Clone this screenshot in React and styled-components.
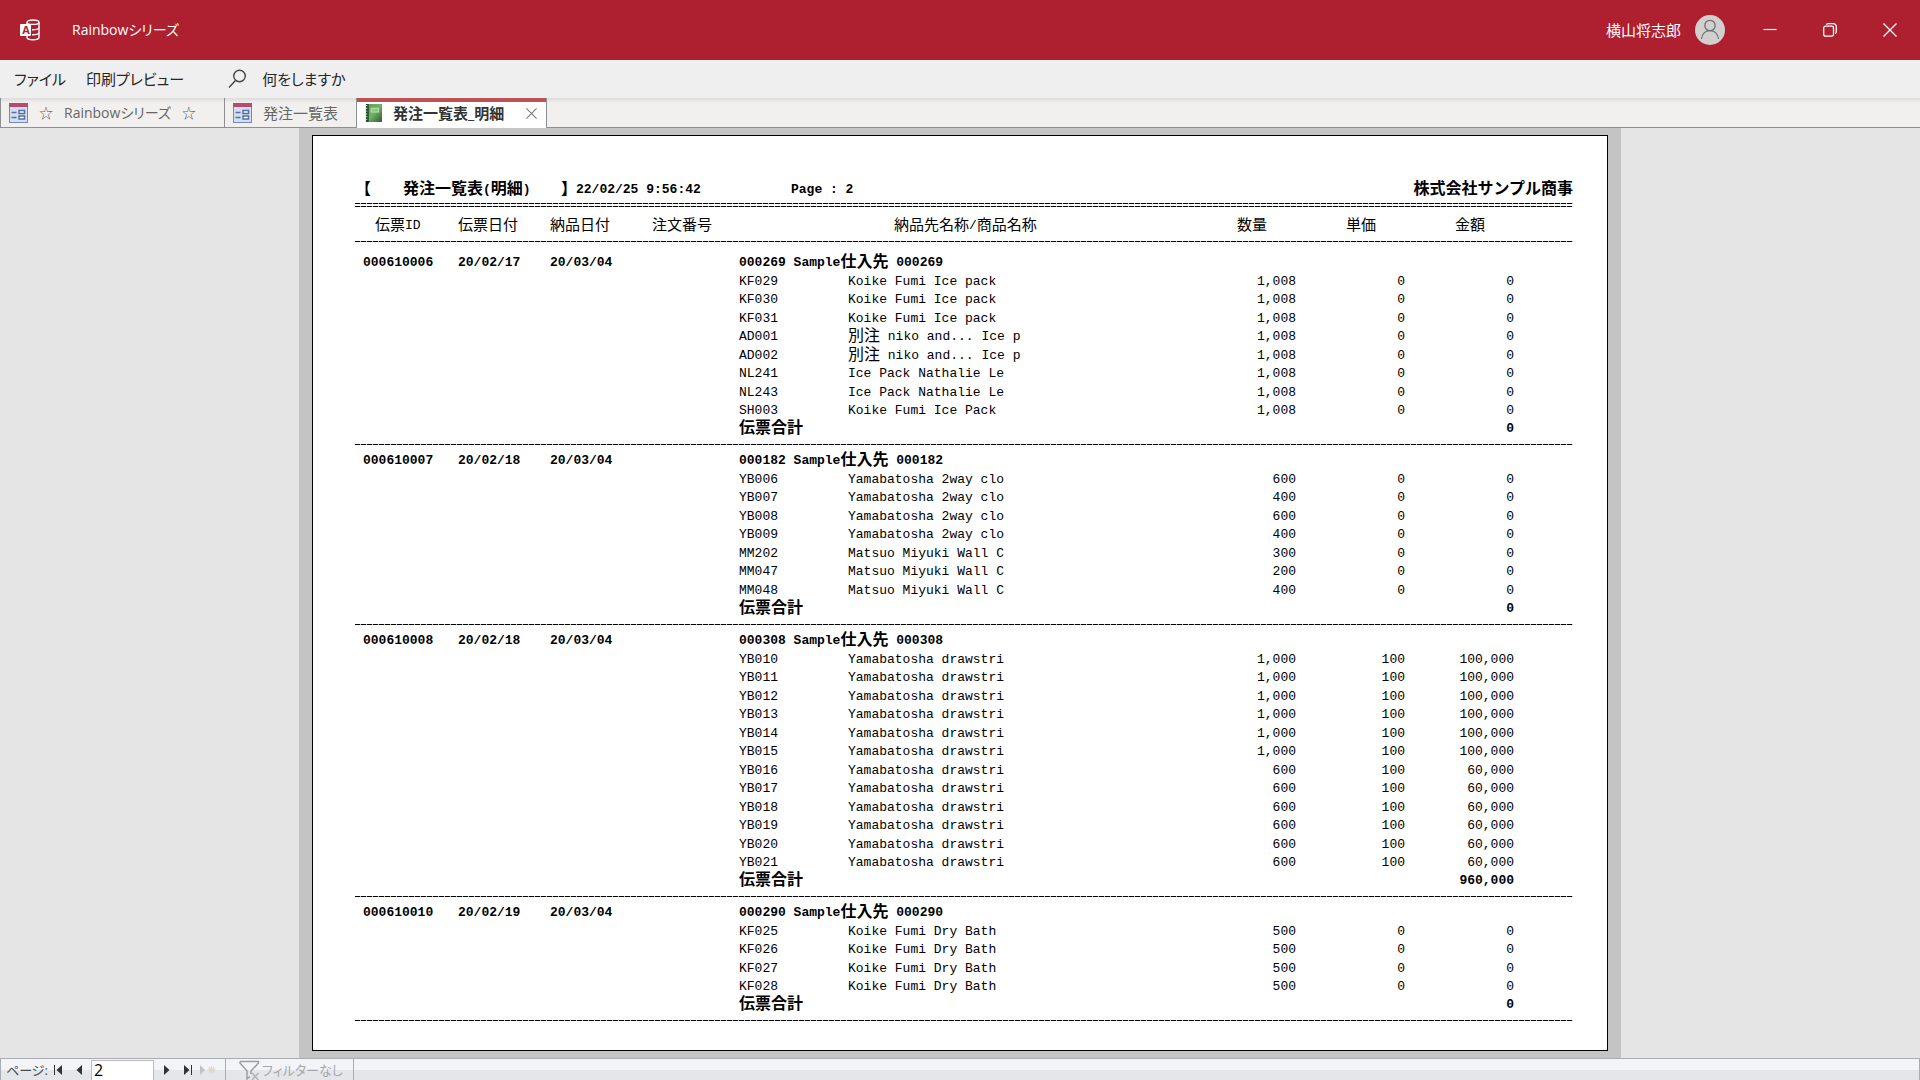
import { Fragment, useState } from "react";
import styled, { createGlobalStyle } from "styled-components";

const repeat = (codes, name, qty, price, amount) =>
    codes.map(code => ({ code, name, qty, price, amount }))

const slips = [
    {
        id: '000610006', ordered: '20/02/17', due: '20/03/04', supplier: '000269', total: '0',
        items: [
            ...repeat(['KF029', 'KF030', 'KF031'], 'Koike Fumi Ice pack', '1,008', '0', '0'),
            ...repeat(['AD001', 'AD002'], '別注 niko and... Ice p', '1,008', '0', '0'),
            ...repeat(['NL241', 'NL243'], 'Ice Pack Nathalie Le', '1,008', '0', '0'),
            ...repeat(['SH003'], 'Koike Fumi Ice Pack', '1,008', '0', '0'),
        ],
    },
    {
        id: '000610007', ordered: '20/02/18', due: '20/03/04', supplier: '000182', total: '0',
        items: [
            ...repeat(['YB006'], 'Yamabatosha 2way clo', '600', '0', '0'),
            ...repeat(['YB007'], 'Yamabatosha 2way clo', '400', '0', '0'),
            ...repeat(['YB008'], 'Yamabatosha 2way clo', '600', '0', '0'),
            ...repeat(['YB009'], 'Yamabatosha 2way clo', '400', '0', '0'),
            ...repeat(['MM202'], 'Matsuo Miyuki Wall C', '300', '0', '0'),
            ...repeat(['MM047'], 'Matsuo Miyuki Wall C', '200', '0', '0'),
            ...repeat(['MM048'], 'Matsuo Miyuki Wall C', '400', '0', '0'),
        ],
    },
    {
        id: '000610008', ordered: '20/02/18', due: '20/03/04', supplier: '000308', total: '960,000',
        items: [
            ...repeat(['YB010', 'YB011', 'YB012', 'YB013', 'YB014', 'YB015'], 'Yamabatosha drawstri', '1,000', '100', '100,000'),
            ...repeat(['YB016', 'YB017', 'YB018', 'YB019', 'YB020', 'YB021'], 'Yamabatosha drawstri', '600', '100', '60,000'),
        ],
    },
    {
        id: '000610010', ordered: '20/02/19', due: '20/03/04', supplier: '000290', total: '0',
        items: repeat(['KF025', 'KF026', 'KF027', 'KF028'], 'Koike Fumi Dry Bath', '500', '0', '0'),
    },
]

// the report face is half-width Latin with full-width kanji, so kanji runs get their own size
const Mixed = ({ children }) =>
    children.split(/([\u3000-\u9fff]+)/).map((part, i) =>
        i % 2 ? <Kanji key={i}>{part}</Kanji> : <Fragment key={i}>{part}</Fragment>
    )

const AccessLogo = () => (
    <svg width="20" height="22" viewBox="0 0 20 22" fill="none" stroke="#fff" strokeWidth="1.4">
        <ellipse cx="13" cy="3.2" rx="6" ry="2.2" />
        <path d="M7 3.2v15c0 1.5 2.7 2.5 6 2.5s6-1 6-2.5v-15" />
        <path d="M12 10.8c4 0 7-.8 7-2.3M12 15.8c4 0 7-.8 7-2.3" />
        <rect x="0" y="5" width="11" height="12" rx="1" fill="#fff" stroke="none" />
        <text x="6" y="15" textAnchor="middle" fontFamily="Open Sans, sans-serif" fontWeight="700" fontSize="11" fill="#ae2030" stroke="none">A</text>
    </svg>
)

const UserIcon = () => (
    <svg width="30" height="30" viewBox="0 0 30 30" fill="none">
        <circle cx="15" cy="15" r="15" fill="#d2d0ce" />
        <g stroke="#6a7276" strokeWidth="1.3">
            <circle cx="15" cy="10.5" r="5.2" />
            <path d="M6.5 24c.6-5 4-8.3 8.5-8.3s7.9 3.3 8.5 8.3" />
        </g>
    </svg>
)

const MinimizeIcon = () => (
    <svg width="14" height="14" viewBox="0 0 14 14" stroke="#fff" strokeWidth="1.2"><path d="M.5 6.5h13" /></svg>
)

const RestoreIcon = () => (
    <svg width="14" height="14" viewBox="0 0 14 14" fill="none" stroke="#fff" strokeWidth="1.3">
        <rect x=".7" y="3.2" width="9.8" height="10" rx="1.8" />
        <path d="M3.3 1.6C3.8 1 4.4.7 5.2.7H10c2 0 3.3 1.4 3.3 3.3v4.5c0 1-.4 1.7-1 2.1" />
    </svg>
)

const CloseIcon = ({ size = 14, color = '#fff' }) => (
    <svg width={size} height={size} viewBox="0 0 14 14" stroke={color} strokeWidth="1.3"><path d="M.5.5l13 13M13.5.5l-13 13" /></svg>
)

const SearchIcon = () => (
    <svg width="19" height="20" viewBox="0 0 19 20" fill="none" stroke="#444" strokeWidth="1.4">
        <circle cx="11.5" cy="7" r="5.8" />
        <path d="M7.5 11.5L1 18.5" />
    </svg>
)

const FormIcon = () => (
    <svg width="19" height="20" viewBox="0 0 19 20">
        <rect x=".5" y=".5" width="18" height="19" fill="#d3def0" stroke="#7389b0" />
        <rect width="19" height="4" fill="#b84a6f" />
        <g fill="none" stroke="#56709e" strokeWidth="1.5">
            <path d="M2.5 9.5h5M2.5 14.5h5" />
            <rect x="10" y="7.5" width="5.5" height="3" fill="#fff" />
            <rect x="10" y="13" width="5.5" height="3" fill="#fff" />
        </g>
    </svg>
)

const ReportIcon = () => (
    <svg width="17" height="18" viewBox="0 0 18 19">
        <defs>
            <linearGradient id="cover" x1="0" y1="0" x2="1" y2="1">
                <stop offset="0" stopColor="#5c9c58" />
                <stop offset=".5" stopColor="#6fb269" />
                <stop offset="1" stopColor="#2e5a2f" />
            </linearGradient>
        </defs>
        <rect x="1" width="17" height="19" fill="url(#cover)" />
        <rect x="1" width="3" height="19" fill="#254a28" />
        <path d="M1.5 1v18" stroke="#d5dfd3" strokeWidth="2" strokeDasharray="1 2" />
        <rect x="6.5" y="4.5" width="8" height="4" fill="#8cc785" stroke="#b9e0b2" />
    </svg>
)

const NavIcon = ({ flip, bar }) => (
    <svg width="10" height="10" viewBox="0 0 10 10" fill="#333">
        <g transform={flip ? 'matrix(-1 0 0 1 10 0)' : undefined}>
            <path d="M1 0l5.5 5L1 10z" />
            {bar && <rect x="8" y="0" width="1" height="10" />}
        </g>
    </svg>
)

const NewRecordIcon = () => (
    <svg width="18" height="10" viewBox="0 0 18 10" fill="#c0c2c5">
        <path d="M1 0l5 5-5 5z" />
        <path d="M12.5 1v8M8.5 5h8M9.7 2.2l5.6 5.6M15.3 2.2L9.7 7.8" stroke="#ded9c8" strokeWidth="1.3" />
    </svg>
)

const FilterIcon = () => (
    <svg width="21" height="20" viewBox="0 0 21 20" fill="none" stroke="#9c9ea2" strokeWidth="1.5">
        <path d="M1 1.5h18.5V3L12 11v3M1 1.5V3l7 8v8l3-2.5" />
        <path d="M13 13l6.5 7M19.5 13L13 20" stroke="#b2b3b6" />
    </svg>
)

const App = () => {
    const [page, setPage] = useState('2')

    return (
        <Window>
            <GlobalStyle />

            <TitleBar>
                <AccessLogo />
                <AppName>Rainbowシリーズ</AppName>
                <UserName>横山将志郎</UserName>
                <UserIcon />
                <WindowButtons>
                    <WindowButton aria-label="最小化"><MinimizeIcon /></WindowButton>
                    <WindowButton aria-label="元に戻す"><RestoreIcon /></WindowButton>
                    <WindowButton aria-label="閉じる"><CloseIcon /></WindowButton>
                </WindowButtons>
            </TitleBar>

            <MenuBar>
                <MenuButton>ファイル</MenuButton>
                <MenuButton>印刷プレビュー</MenuButton>
                <TellMe><SearchIcon />何をしますか</TellMe>
            </MenuBar>

            <TabBar>
                <Tab $width={224} $small><FormIcon /><span>☆</span><span>Rainbowシリーズ</span><span>☆</span></Tab>
                <Tab $width={132}><FormIcon />発注一覧表</Tab>
                <Tab $width={191} $active>
                    <ReportIcon />発注一覧表_明細
                    <TabClose aria-label="タブを閉じる"><CloseIcon size={11} color="#777" /></TabClose>
                </Tab>
            </TabBar>

            <Viewer>
                <Gutter>
                    <Sheet>
                        <ReportHead>
                            <span><Mixed>【</Mixed></span>
                            <span><Mixed>発注一覧表(明細)</Mixed></span>
                            <span><Mixed>】</Mixed></span>
                            <span>22/02/25 9:56:42</span>
                            <span>Page : 2</span>
                            <span><Mixed>株式会社サンプル商事</Mixed></span>
                        </ReportHead>
                        <DoubleRule />
                        <Report>
                            <colgroup>
                                <Col $width={103} /><Col $width={92} /><Col $width={102} /><Col $width={87} />
                                <Col $width={109} /><col /><Col $width={59} /><Col $width={109} />
                                <Col $width={109} /><Col $width={59} />
                            </colgroup>
                            <thead>
                                <tr>
                                    <Th $indent={20}><Mixed>伝票ID</Mixed></Th>
                                    <Th><Mixed>伝票日付</Mixed></Th>
                                    <Th><Mixed>納品日付</Mixed></Th>
                                    <Th><Mixed>注文番号</Mixed></Th>
                                    <Th />
                                    <Th $indent={46}><Mixed>納品先名称/商品名称</Mixed></Th>
                                    <Th><Mixed>数量</Mixed></Th>
                                    <Th $indent={50}><Mixed>単価</Mixed></Th>
                                    <Th $indent={50}><Mixed>金額</Mixed></Th>
                                    <Th />
                                </tr>
                                <RuleRow><td colSpan={10} /></RuleRow>
                                <SpaceRow><td colSpan={10} /></SpaceRow>
                            </thead>
                            {slips.map(slip => (
                                <tbody key={slip.id}>
                                    <SlipRow>
                                        <Td $indent={8}>{slip.id}</Td>
                                        <Td>{slip.ordered}</Td>
                                        <Td>{slip.due}</Td>
                                        <Td />
                                        <Td colSpan={6}><Mixed>{slip.supplier + ' Sample仕入先 ' + slip.supplier}</Mixed></Td>
                                    </SlipRow>
                                    {slip.items.map(item => (
                                        <ItemRow key={item.code}>
                                            <Td colSpan={4} />
                                            <Td>{item.code}</Td>
                                            <Td><Mixed>{item.name}</Mixed></Td>
                                            <Td $right>{item.qty}</Td>
                                            <Td $right>{item.price}</Td>
                                            <Td $right>{item.amount}</Td>
                                            <Td />
                                        </ItemRow>
                                    ))}
                                    <TotalRow>
                                        <Td colSpan={4} />
                                        <Td colSpan={4}><Mixed>伝票合計</Mixed></Td>
                                        <Td $right>{slip.total}</Td>
                                        <Td />
                                    </TotalRow>
                                    <RuleRow><td colSpan={10} /></RuleRow>
                                </tbody>
                            ))}
                        </Report>
                    </Sheet>
                </Gutter>
            </Viewer>

            <StatusBar>
                <PageNav>
                    <label htmlFor="page">ページ:</label>
                    <NavButton aria-label="先頭のページ"><NavIcon flip bar /></NavButton>
                    <NavButton aria-label="前のページ"><NavIcon flip /></NavButton>
                    <PageInput id="page" value={page} onChange={e => setPage(e.target.value)} />
                    <NavButton aria-label="次のページ"><NavIcon /></NavButton>
                    <NavButton aria-label="最後のページ"><NavIcon bar /></NavButton>
                    <NavButton aria-label="新しいレコード" disabled><NewRecordIcon /></NavButton>
                </PageNav>
                <FilterButton disabled><FilterIcon />フィルターなし</FilterButton>
            </StatusBar>
        </Window>
    );
}

const GlobalStyle = createGlobalStyle`
* {
    box-sizing: border-box;
}

body {
    margin: 0;
}

button, input {
    font: inherit;
    color: inherit;
    font-feature-settings: inherit;
}

button {
    border: none;
    padding: 0;
    background: none;
}

svg {
    display: block;
    flex: none;
}
`;

const Window = styled.div`
    min-height: 100vh;
    display: flex;
    flex-direction: column;
    background: #e5e5e5;
    font-family: "Open Sans", "Noto Sans CJK JP", sans-serif;
    font-size: 15px;
    font-feature-settings: "palt";
    line-height: 20px;
    white-space: nowrap;
`;

const TitleBar = styled.header`
    height: 60px;
    display: flex;
    align-items: center;
    padding-left: 20px;
    background: #ae2030;
    color: #fff;
`;

const AppName = styled.span`
    margin-left: 32px;
    font-size: 14px;
`;

const UserName = styled.span`
    margin-left: auto;
    margin-right: 14px;
`;

const WindowButtons = styled.div`
    display: flex;
    margin-left: 15px;
`;

const WindowButton = styled.button`
    width: 60px;
    height: 60px;
    display: flex;
    align-items: center;
    justify-content: center;
`;

const MenuBar = styled.nav`
    height: 38px;
    display: flex;
    align-items: center;
    gap: 20px;
    padding-left: 14px;
    background: #efefef;
    color: #262626;
`;

const MenuButton = styled.button``;

const TellMe = styled.button`
    display: flex;
    align-items: center;
    gap: 15px;
    margin-left: 24px;
`;

const TabBar = styled.div`
    height: 30px;
    display: flex;
    background: linear-gradient(#dcdbda, #f2f0ee 5px);
    border-bottom: 1px solid #8a9095;
`;

const Tab = styled.div`
    width: ${p => p.$width}px;
    height: ${p => p.$active ? 30 : 29}px;
    display: flex;
    align-items: center;
    gap: 11px;
    padding: 0 9px 0 8px;
    border-left: 1px solid #8a9095;
    color: ${p => p.$active ? '#333' : '#666'};
    font-size: ${p => p.$small ? 14 : 15}px;
    font-weight: ${p => p.$active ? 700 : 400};

    ${p => p.$active && `
        background: #fff;
        border-right: 1px solid #8a9095;
        box-shadow: inset 0 4px 0 #bd5256;
    `}
`;

const TabClose = styled.button`
    margin-left: auto;
`;

const Viewer = styled.main`
    flex: 1;
    display: flex;
    justify-content: center;
`;

const Gutter = styled.div`
    width: 100%;
    max-width: 1322px;
    display: flex;
    padding: 7px 13px;
    background: #c4c4c4;
`;

const Sheet = styled.article`
    flex: 1;
    padding: 40px 34px 20px 42px;
    border: 1px solid #000;
    background: #fff;
    color: #000;
    font-family: "Liberation Mono", "Noto Sans CJK JP", monospace;
    font-size: 13px;
    font-feature-settings: normal;
    line-height: 18px;
`;

const Kanji = styled.span`
    font-family: "Noto Sans CJK JP", sans-serif;
    font-size: 16px;
    line-height: 0;
    vertical-align: -1px;
`;

const ReportHead = styled.header`
    height: 27px;
    display: grid;
    grid-template-columns: 48px 158px 15px 215px 1fr auto;
    align-items: center;
    font-weight: 700;
`;

const dashes = 'repeating-linear-gradient(to right, #000 0 5px, #bbb 5px 6px)';

const DoubleRule = styled.div`
    height: 4px;
    background:
        ${dashes} top / 100% 1px no-repeat,
        ${dashes} bottom / 100% 1px no-repeat;
`;

const Report = styled.table`
    width: 100%;
    table-layout: fixed;
    border-collapse: collapse;
`;

const Col = styled.col`
    width: ${p => p.$width}px;
`;

const Th = styled.th`
    height: 28px;
    padding: 10px 0 0 ${p => p.$indent || 0}px;
    font-weight: 400;
    text-align: left;

    ${Kanji} {
        font-size: 15px;
    }
`;

const Td = styled.td`
    padding: 0 0 0 ${p => p.$indent || 0}px;
    text-align: ${p => p.$right ? 'right' : 'left'};
`;

const SlipRow = styled.tr`
    height: 19px;
    font-weight: 700;
`;

const ItemRow = styled.tr`
    height: 18px;

    &:nth-child(even) {
        height: 19px;
    }
`;

const TotalRow = styled.tr`
    height: 18px;
    font-weight: 700;
`;

const RuleRow = styled.tr`
    height: 13px;

    td {
        padding: 0;
        background: ${dashes} 0 6px / 100% 1px no-repeat;
    }
`;

const SpaceRow = styled.tr`
    height: 5px;

    td {
        padding: 0;
    }
`;

const StatusBar = styled.footer`
    height: 22px;
    display: flex;
    border: 1px solid #a9acb3;
    border-bottom: none;
    background: linear-gradient(#f3f4f7 11px, #e5e6ea 11px);
    color: #44484e;
    font-size: 13px;
`;

const PageNav = styled.div`
    width: 225px;
    display: flex;
    align-items: center;
    padding-left: 5px;
    border-right: 1px solid #a9acb3;
`;

const NavButton = styled.button`
    width: 20px;
    height: 20px;
    display: flex;
    align-items: center;
    justify-content: center;
`;

const PageInput = styled.input`
    width: 63px;
    height: 20px;
    margin: 0 4px 0 3px;
    padding: 0 2px;
    border: 1px solid #bbb;
    border-bottom: none;
    background: #fff;
    color: #000;
    font-size: 16px;
`;

const FilterButton = styled.button`
    width: 128px;
    display: flex;
    align-items: center;
    gap: 2px;
    padding-left: 13px;
    border-right: 1px solid #a9acb3;
    color: #a5a7ab;
`;


export default App;
